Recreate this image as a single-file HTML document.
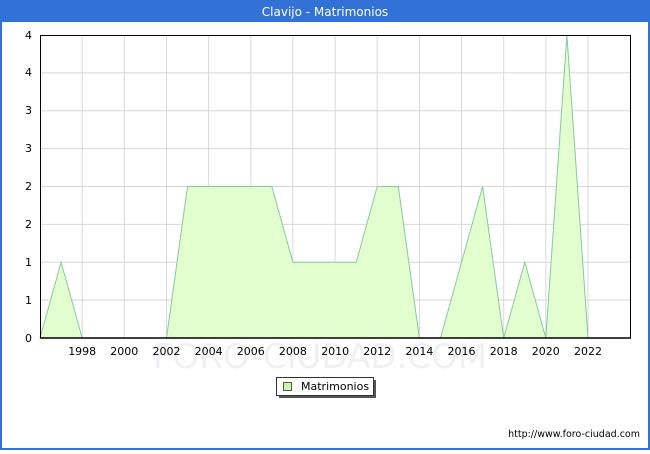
<!DOCTYPE html>
<html><head><meta charset="utf-8"><style>
body{margin:0;width:650px;height:450px;overflow:hidden;background:#fff;font-family:"DejaVu Sans","Liberation Sans",sans-serif;}
</style></head><body>
<svg width="650" height="450" xmlns="http://www.w3.org/2000/svg" font-family="DejaVu Sans, Liberation Sans, sans-serif">
<rect x="0" y="0" width="650" height="450" fill="#fff"/>
<rect x="0" y="0" width="650" height="22" fill="#3272d6"/>
<rect x="0" y="0" width="2" height="450" fill="#3272d6"/>
<rect x="648" y="0" width="2" height="450" fill="#3272d6"/>
<rect x="0" y="448" width="650" height="2" fill="#3272d6"/>
<text x="325" y="16" fill="#fff" font-size="12" text-anchor="middle">Clavijo - Matrimonios</text>
<text x="320" y="368" fill="#f0f0f5" font-size="34" text-anchor="middle">FORO-CIUDAD.COM</text>
<g stroke="#d8d8d8" stroke-width="1">
<line x1="40" y1="72.9" x2="630" y2="72.9"/><line x1="40" y1="110.8" x2="630" y2="110.8"/>
<line x1="40" y1="148.6" x2="630" y2="148.6"/><line x1="40" y1="186.5" x2="630" y2="186.5"/>
<line x1="40" y1="224.4" x2="630" y2="224.4"/><line x1="40" y1="262.3" x2="630" y2="262.3"/>
<line x1="40" y1="300.1" x2="630" y2="300.1"/>
<line x1="82.2" y1="35" x2="82.2" y2="338"/><line x1="124.3" y1="35" x2="124.3" y2="338"/>
<line x1="166.5" y1="35" x2="166.5" y2="338"/><line x1="208.6" y1="35" x2="208.6" y2="338"/>
<line x1="250.8" y1="35" x2="250.8" y2="338"/><line x1="292.9" y1="35" x2="292.9" y2="338"/>
<line x1="335.1" y1="35" x2="335.1" y2="338"/><line x1="377.2" y1="35" x2="377.2" y2="338"/>
<line x1="419.4" y1="35" x2="419.4" y2="338"/><line x1="461.5" y1="35" x2="461.5" y2="338"/>
<line x1="503.7" y1="35" x2="503.7" y2="338"/><line x1="545.8" y1="35" x2="545.8" y2="338"/>
<line x1="588" y1="35" x2="588" y2="338"/>
</g>
<polygon fill="#e2fdce" stroke="#88c9a0" stroke-width="1" points="40,338 61.1,262.3 82.2,338 103.2,338 124.3,338 145.4,338 166.5,338 187.5,186.5 208.6,186.5 229.7,186.5 250.8,186.5 271.8,186.5 292.9,262.3 314,262.3 335.1,262.3 356.2,262.3 377.2,186.5 398.3,186.5 419.4,338 440.5,338 461.5,262.3 482.6,186.5 503.7,338 524.8,262.3 545.8,338 566.9,35 588,338"/>
<rect x="40.5" y="35.5" width="590" height="302.5" fill="none" stroke="#000" stroke-width="1"/>
<line x1="40" y1="338" x2="631" y2="338" stroke="#000" stroke-width="1.5"/>
<g font-size="11" fill="#000" text-anchor="end">
<text x="32" y="342">0</text><text x="32" y="304">1</text><text x="32" y="266">1</text>
<text x="32" y="228">2</text><text x="32" y="190">2</text><text x="32" y="152">3</text>
<text x="32" y="114">3</text><text x="32" y="76">4</text><text x="32" y="39">4</text>
</g>
<g font-size="11" fill="#000" text-anchor="middle">
<text x="82.2" y="355">1998</text><text x="124.3" y="355">2000</text><text x="166.5" y="355">2002</text>
<text x="208.6" y="355">2004</text><text x="250.8" y="355">2006</text><text x="292.9" y="355">2008</text>
<text x="335.1" y="355">2010</text><text x="377.2" y="355">2012</text><text x="419.4" y="355">2014</text>
<text x="461.5" y="355">2016</text><text x="503.7" y="355">2018</text><text x="545.8" y="355">2020</text>
<text x="588" y="355">2022</text>
</g>
<rect x="279" y="380" width="97" height="18" fill="#555"/>
<rect x="276.5" y="377.5" width="97" height="18" fill="#fff" stroke="#333" stroke-width="1"/>
<rect x="283.5" y="382.5" width="8" height="8" fill="#c8f7a8" stroke="#555" stroke-width="1"/>
<text x="301" y="390" font-size="11" fill="#000">Matrimonios</text>
<text x="640" y="437" font-size="9.5" fill="#000" text-anchor="end">http://www.foro-ciudad.com</text>
</svg>
</body></html>
